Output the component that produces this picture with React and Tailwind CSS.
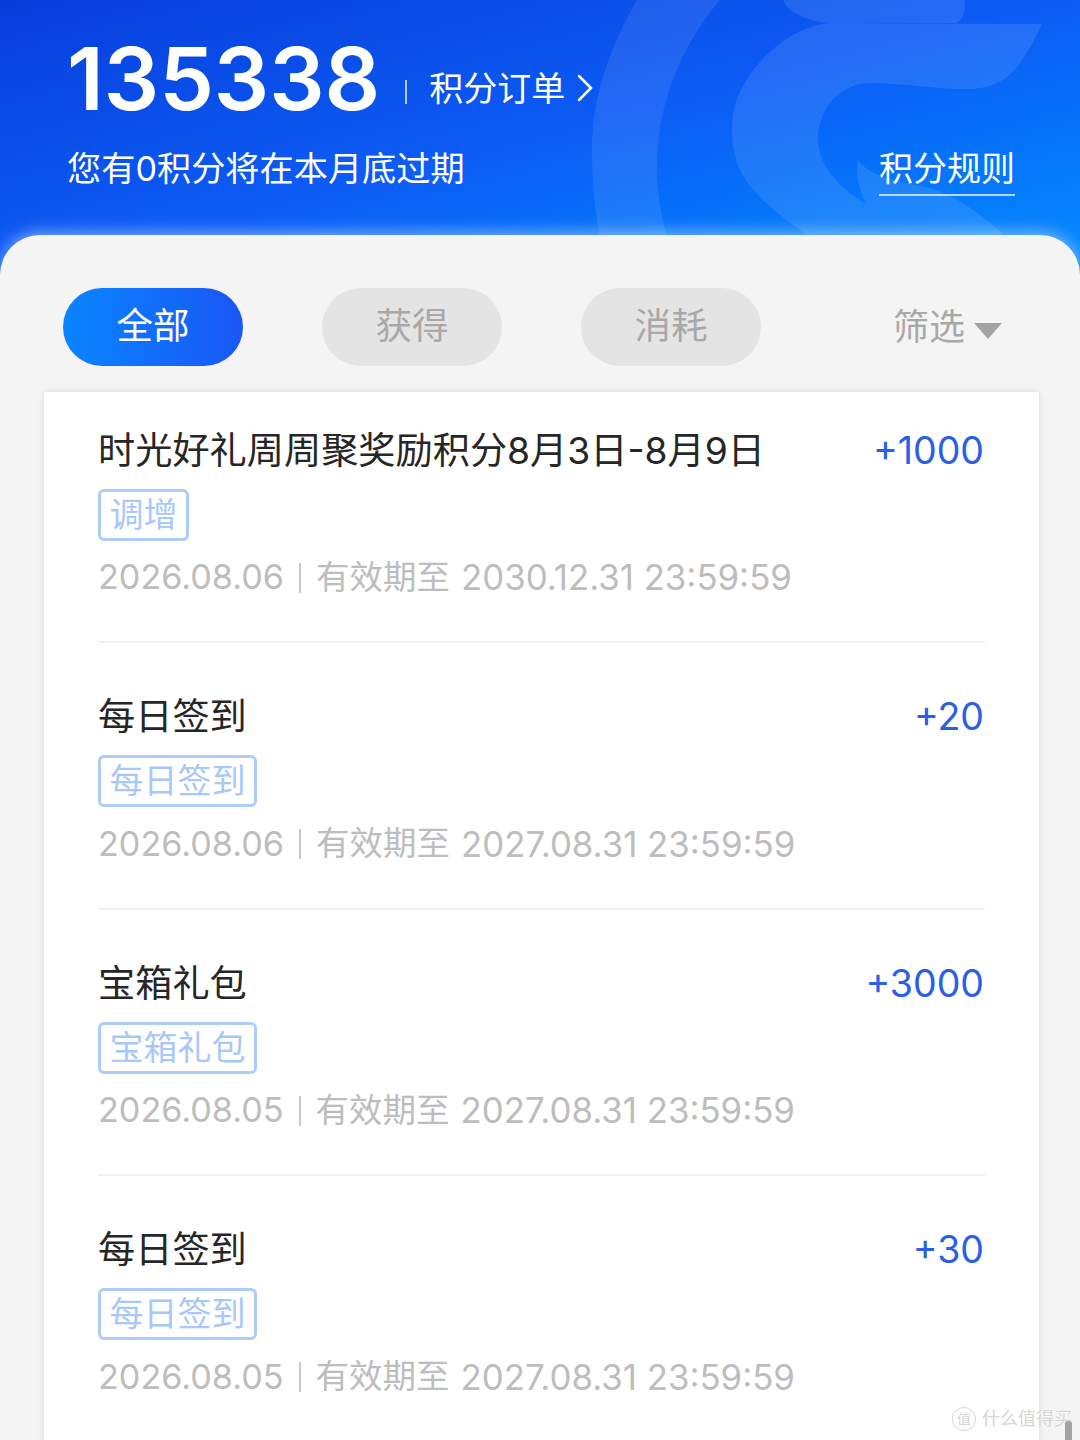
import React from "react";

const rows = [
  { title: "时光好礼周周聚奖励积分8月3日-8月9日", tag: "调增", points: "+1000", date: "2026.08.06", until: "2030.12.31 23:59:59" },
  { title: "每日签到", tag: "每日签到", points: "+20", date: "2026.08.06", until: "2027.08.31 23:59:59" },
  { title: "宝箱礼包", tag: "宝箱礼包", points: "+3000", date: "2026.08.05", until: "2027.08.31 23:59:59" },
  { title: "每日签到", tag: "每日签到", points: "+30", date: "2026.08.05", until: "2027.08.31 23:59:59" },
];

const font = "font-['Inter','Noto_Sans_CJK_SC',sans-serif]";

const Swirl = () => (
  <svg className="absolute right-0 top-0" width="520" height="250" viewBox="560 0 520 250" fill="none">
    <path d="M637 0C608 50 592 100 592 150C592 185 595 212 602 250H670C661 215 656 190 657 160C659 100 682 45 720 0Z" fill="#fff" fillOpacity="0.09" />
    <path d="M783 0C788 12 805 21 830 23H957C964 17 966 8 965 0Z" fill="#fff" fillOpacity="0.1" />
    <path d="M830 23C790 26 747 65 735 105C730 125 731 150 740 170C752 195 785 222 830 250H1020C985 215 955 195 927 187C885 180 866 172 858 160C856 172 858 188 866 204C850 195 818 170 818 140C818 112 835 90 860 84C885 81 925 88 960 89C990 90 1008 82 1022 60C1030 48 1037 36 1042 24Z" fill="#fff" fillOpacity="0.1" />
  </svg>
);

const Tab = ({ label, active }) => (
  <div
    className={
      active
        ? "flex h-[77.5px] w-[180px] items-center justify-center rounded-[39px] bg-gradient-to-r from-[#0a84ff] to-[#1a56f5] text-[36.5px] text-white"
        : "flex h-[77.5px] w-[180px] items-center justify-center rounded-[39px] bg-[#e4e4e4] text-[36.5px] text-[#a8a8a8]"
    }
  >
    {label}
  </div>
);

const Row = ({ row }) => (
  <div className="mx-[54px] mb-[15.5px] h-[251px] border-b-2 border-[#f1f1f1] pt-[35.5px]">
    <div className="flex h-[46px] items-center justify-between">
      <span className="text-[37.2px] leading-none text-[#262626]">{row.title}</span>
      <span className="pr-[1px] text-[37.5px] leading-none text-[#2a5fe6]">{row.points}</span>
    </div>
    <div className="mt-[15px] flex">
      <span className="flex h-[52px] items-center rounded-[6px] border-[3px] border-[#aeccfb] px-[8.5px] text-[34px] leading-none text-[#a9c8fa]">
        {row.tag}
      </span>
    </div>
    <div className="mt-[15px] flex h-[44px] items-center leading-none text-[#bdbdbd]">
      <span className="text-[34.2px]">{row.date}</span>
      <span className="mx-[15px] h-[30px] w-[2px] bg-[#c8c8c8]" />
      <span className="text-[33.5px]">有效期至</span>
      <span className="ml-[11px] text-[34.8px]">{row.until}</span>
    </div>
  </div>
);

export default function App() {
  return (
    <div className={`${font} relative h-[1440px] w-[1080px] overflow-hidden bg-[#f4f4f4]`}>
      <div className="relative h-[275px] overflow-hidden bg-gradient-to-br from-[#0a3ddb] via-[#0d5cf5] to-[#0a8cff] px-[67px] pt-[37px] text-white">
        <Swirl />
        <div className="relative flex items-center">
          <span className="text-[87px] font-semibold leading-[84px]">135338</span>
          <span className="ml-[25px] mt-[26px] h-[24px] w-[2px] bg-white/70" />
          <span className="ml-[22px] mt-[20px] text-[34px] leading-none">积分订单</span>
          <svg className="ml-[12px] mt-[18px]" width="16" height="28" viewBox="0 0 16 28" fill="none" stroke="#fff" strokeWidth="2.5" strokeLinecap="round">
            <path d="M2 2L14 14L2 26" />
          </svg>
        </div>
        <div className="relative mt-[25px] flex items-start justify-between">
          <span className="text-[34.2px] leading-[46px]">您有0积分将在本月底过期</span>
          <span className="mr-[-2px] border-b-2 border-white/70 pb-[2px] text-[34px] leading-[46px]">积分规则</span>
        </div>
      </div>
      <div className="relative mt-[-40px] rounded-t-[40px] bg-[#f4f4f4] shadow-[0_-3px_16px_rgba(255,255,255,0.45)]">
        <div className="flex h-[157px] items-start pl-[63px] pt-[53px]">
          <div className="flex gap-[79px]">
            <Tab label="全部" active />
            <Tab label="获得" />
            <Tab label="消耗" />
          </div>
          <div className="ml-[132px] flex h-[77px] items-center gap-[9px] text-[36px] text-[#a8a8a8]">
            <span>筛选</span>
            <svg className="mt-[8px]" width="28" height="16" viewBox="0 0 28 16">
              <path d="M0 0H28L14 16Z" fill="#a3a3a3" />
            </svg>
          </div>
        </div>
        <div className="ml-[44px] w-[995px] bg-white shadow-[0_0_6px_rgba(0,0,0,0.12)]">
          {rows.map((row) => (
            <Row key={row.title + row.points} row={row} />
          ))}
        </div>
      </div>
      <div className="absolute right-[8px] top-[1405px] flex items-center gap-[6px] text-[18px] text-[#d6d6d6] [text-shadow:0_0_2px_#fff]">
        <span className="flex h-[24px] w-[24px] items-center justify-center rounded-full border border-[#d6d6d6] text-[14px]">值</span>
        <span>什么值得买</span>
      </div>
      <div className="absolute right-[8px] top-[1421px] h-[19px] w-[7px] rounded-t-[3px] bg-[#a3a3a3]" />
    </div>
  );
}
